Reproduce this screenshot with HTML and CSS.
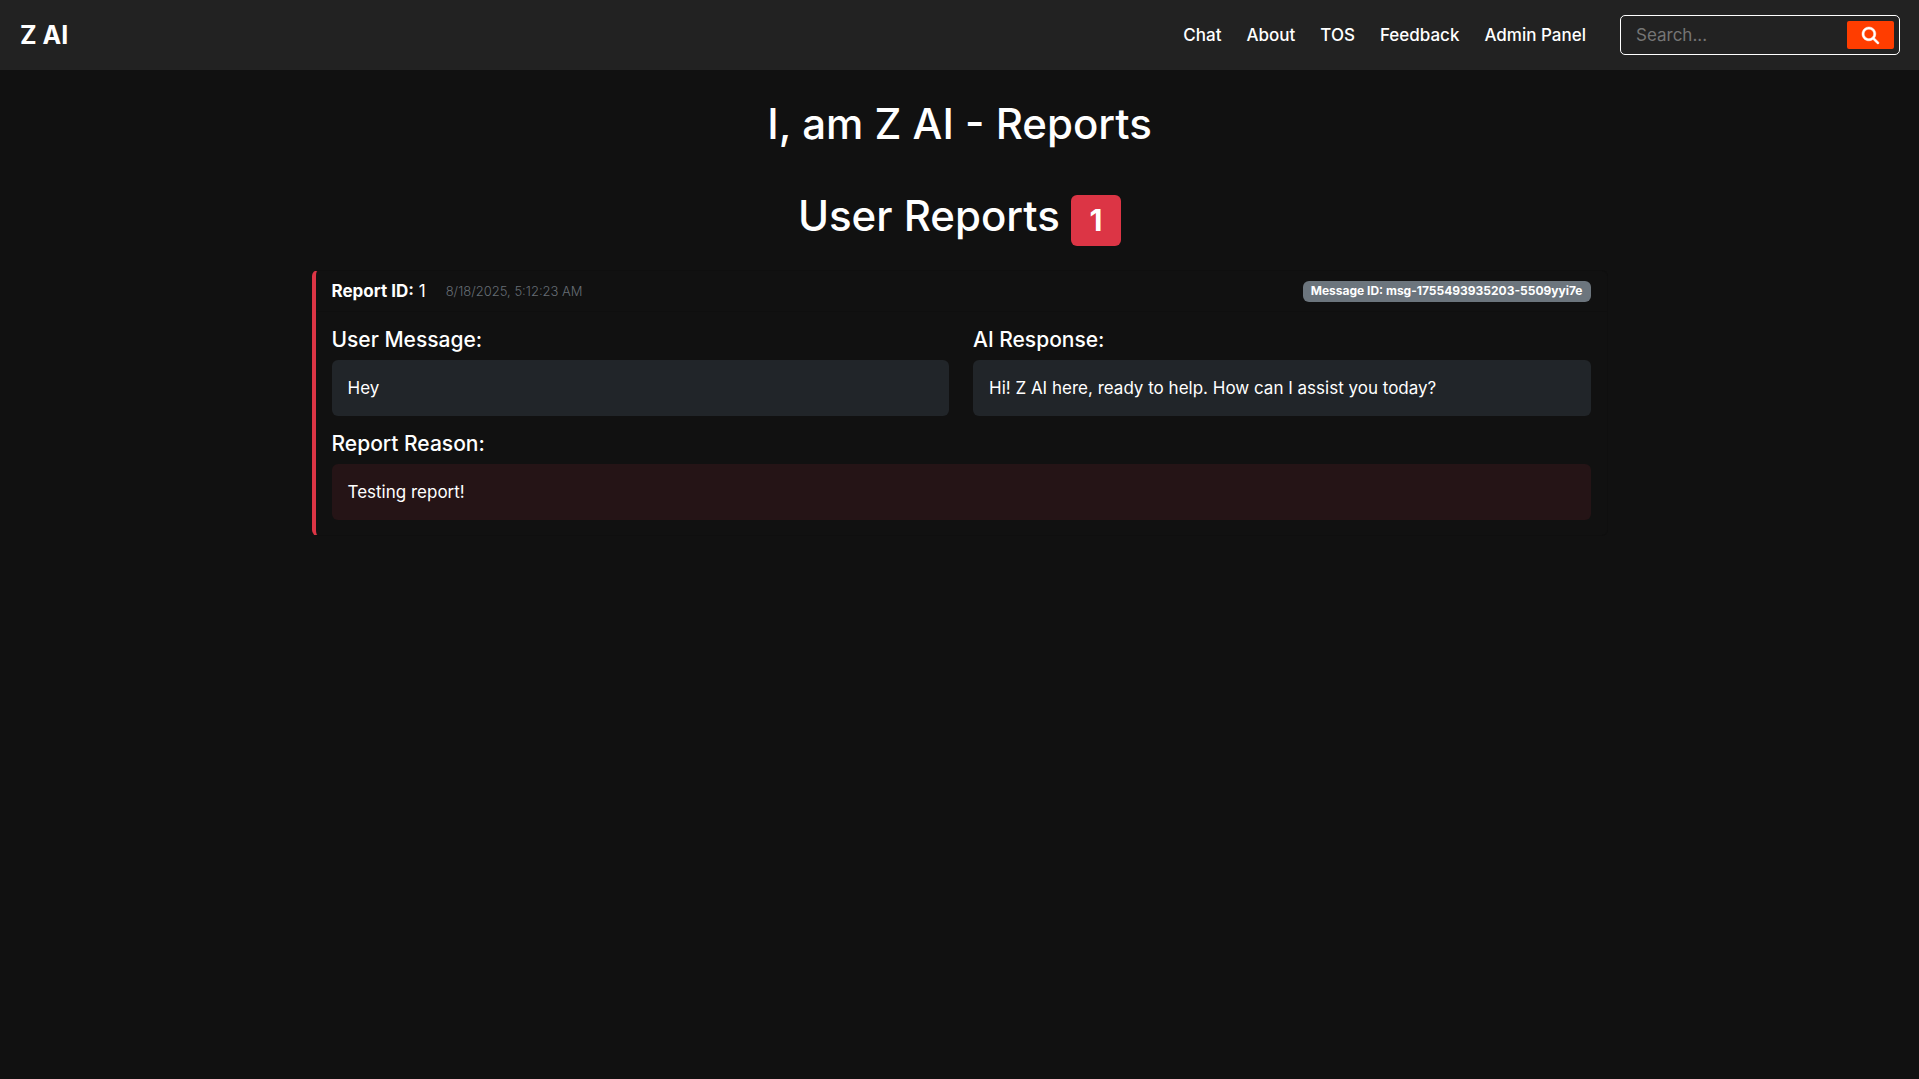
FILE: index.html
```html
<!DOCTYPE html>
<html lang="en">
<head>
  <meta charset="utf-8">
  <meta name="viewport" content="width=device-width, initial-scale=1">
  <title>Z AI - Reports</title>
  <link rel="stylesheet" href="styles.css">
</head>
<body>
  <header class="navbar">
    <a class="brand" href="#">Z AI</a>
    <nav class="nav-links">
      <a href="#">Chat</a>
      <a href="#">About</a>
      <a href="#">TOS</a>
      <a href="#">Feedback</a>
      <a href="#">Admin Panel</a>
    </nav>
    <form class="search" role="search">
      <input class="search-input" type="search" placeholder="Search..." aria-label="Search">
      <button class="search-button" type="submit" aria-label="Submit search">
        <svg class="search-icon" viewBox="0 0 512 512" aria-hidden="true"><path fill="currentColor" stroke="currentColor" stroke-width="14" d="M416 208c0 45.900-14.900 88.300-40 122.700L502.600 457.400c12.500 12.500 12.500 32.800 0 45.300s-32.800 12.500-45.300 0L330.700 376c-34.400 25.200-76.800 40-122.700 40C93.100 416 0 322.900 0 208S93.100 0 208 0S416 93.100 416 208zM208 352a144 144 0 1 0 0-288 144 144 0 1 0 0 288z"/></svg>
      </button>
    </form>
  </header>

  <main class="container">
    <h1 class="title">I, am Z AI - Reports</h1>
    <h2 class="title subtitle">User Reports <span class="count">1</span></h2>

    <article class="report">
      <header class="report-header">
        <div class="report-meta">
          <span><strong>Report ID:</strong> 1</span>
          <time class="report-date">8/18/2025, 5:12:23 AM</time>
        </div>
        <span class="message-id">Message ID: msg-1755493935203-5509yyi7e</span>
      </header>
      <div class="report-body">
        <section>
          <h3 class="label">User Message:</h3>
          <p class="box">Hey</p>
        </section>
        <section>
          <h3 class="label">AI Response:</h3>
          <p class="box">Hi! Z AI here, ready to help. How can I assist you today?</p>
        </section>
        <section class="wide">
          <h3 class="label">Report Reason:</h3>
          <p class="box box-reason">Testing report!</p>
        </section>
      </div>
    </article>
  </main>
</body>
</html>
```
FILE: styles.css
```css
* {
  box-sizing: border-box;
}

body {
  margin: 0;
  background: #111;
  color: #fff;
  font-family: Inter, sans-serif;
  font-size: 17px;
  line-height: 24px;
}

.navbar {
  display: flex;
  align-items: center;
  padding: 15px 19px 15px 20px;
  background: #222;
}

.brand {
  margin-right: auto;
  color: #fff;
  font-size: 25px;
  font-weight: 700;
  text-decoration: none;
}

.nav-links {
  display: flex;
  gap: 25px;
  margin-right: 34px;
}

.nav-links a {
  color: #fff;
  font-weight: 500;
  text-decoration: none;
}

.search {
  display: flex;
  width: 280px;
  height: 40px;
  padding: 5px;
  border: 1px solid #fff;
  border-radius: 5px;
}

.search-input {
  flex: 1;
  min-width: 0;
  padding: 0 10px;
  border: 0;
  outline: 0;
  background: transparent;
  color: #fff;
  font: inherit;
}

.search-input::placeholder {
  color: #757575;
}

.search-button {
  display: flex;
  align-items: center;
  justify-content: center;
  width: 47px;
  padding: 0;
  border: 0;
  border-radius: 2px;
  background: #ff3d00;
  color: #fff;
}

.search-icon {
  width: 17px;
  height: 17px;
  overflow: visible;
}

.container {
  max-width: 1320px;
  margin: 0 auto;
  padding: 30px 12px;
}

.title {
  margin: 0 0 44px;
  font-size: 42px;
  font-weight: 500;
  line-height: 48px;
  text-align: center;
}

.subtitle {
  margin-bottom: 24px;
}

.count {
  display: inline-block;
  padding: 10px 16px 11px;
  border-radius: 6px;
  background: #dc3545;
  min-width: 50px;
  font-size: 30px;
  font-weight: 700;
  line-height: 30px;
}

.report {
  border: 1px solid #0f0f0f;
  border-left: 4px solid #dc3545;
  border-radius: 6px;
}

.report-header {
  display: flex;
  align-items: center;
  justify-content: space-between;
  padding: 8px 16px;
  border-bottom: 1px solid #0f0f0f;
}

.report-meta {
  display: flex;
  align-items: center;
  gap: 20px;
}

.report-date {
  color: #666d74;
  font-size: 13px;
  font-weight: 300;
}

.message-id {
  padding: 4px 8px 5px;
  border-radius: 6px;
  background: #6c757d;
  font-size: 12px;
  font-weight: 700;
  line-height: 12px;
}

.report-body {
  display: grid;
  grid-template-columns: 1fr 1fr;
  gap: 16px 24px;
  padding: 16px 16px 15px;
}

.wide {
  grid-column: 1 / -1;
}

.label {
  margin: 0 0 8px;
  font-size: 21px;
  font-weight: 500;
  line-height: 24px;
}

.box {
  margin: 0;
  padding: 16px;
  border-radius: 6px;
  background: #212529;
}

.box-reason {
  background: #251416;
}
```
